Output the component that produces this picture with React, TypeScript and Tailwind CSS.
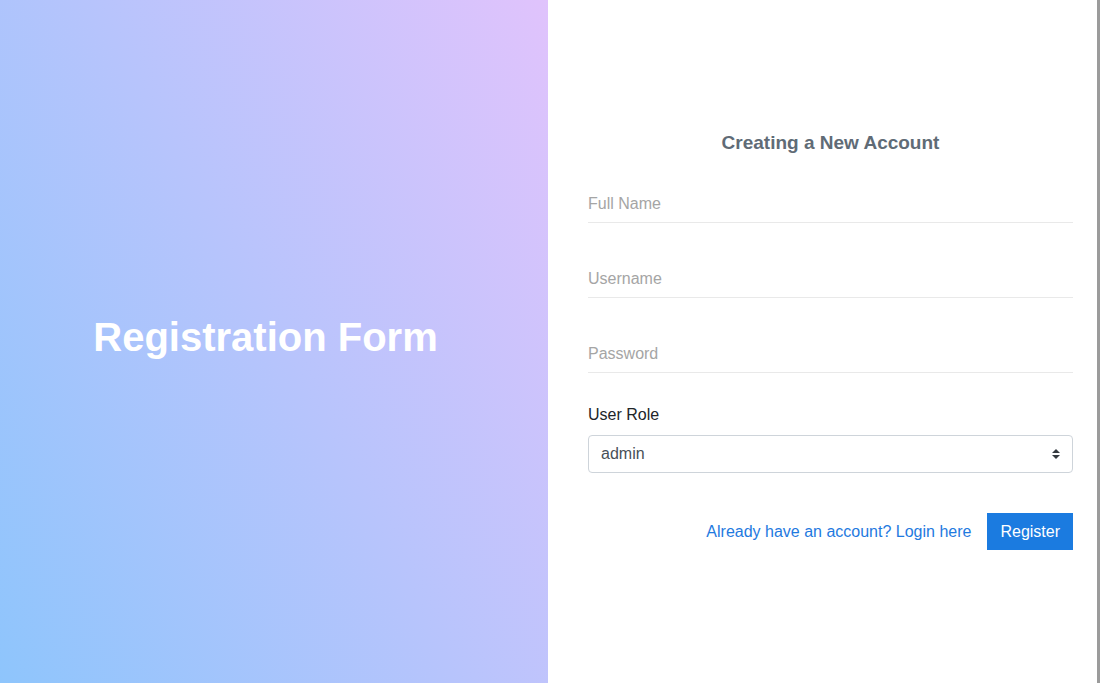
import React, { useState } from 'react';

const ARROW =
  "url(\"data:image/svg+xml,%3csvg xmlns='http://www.w3.org/2000/svg' width='4' height='5' viewBox='0 0 4 5'%3e%3cpath fill='%23343a40' d='M2 0L0 2h4zm0 5L0 3h4z'/%3e%3c/svg%3e\")";

const fields = [
  { name: 'fullName', placeholder: 'Full Name', type: 'text' },
  { name: 'username', placeholder: 'Username', type: 'text' },
  { name: 'password', placeholder: 'Password', type: 'password' }
];

export default function App() {
  const [role, setRole] = useState('admin');

  return (
    <div className="flex h-screen w-full font-['Liberation_Sans',Arial,sans-serif]">
      {/* left side banner */}
      <div className="w-[548px] shrink-0 flex items-center justify-center pr-[17px] pb-[9px] bg-[linear-gradient(62deg,#8ec5fc_0%,#e0c3fc_100%)]">
        <h1 className="text-[40px] font-bold leading-[48px] text-white">Registration Form</h1>
      </div>

      {/* form */}
      <div className="flex-1 bg-white pt-[129px] pl-10 pr-6">
        <h4 className="text-center text-[19px] leading-[27px] font-bold text-[#606b76] mb-[29px]">
          Creating a New Account
        </h4>

        <form onSubmit={e => e.preventDefault()}>
          {fields.map(f => (
            <input
              key={f.name}
              name={f.name}
              type={f.type}
              placeholder={f.placeholder}
              className="block w-full h-[38px] mb-[37px] px-0 text-[16px] text-[#495057] border-b border-[#e9e9e9] outline-none placeholder:text-[#a5a5a5]"
            />
          ))}

          <label className="block text-[16px] leading-6 text-[#212529] mt-[-7px] mb-[8px]">User Role</label>
          <select
            value={role}
            onChange={e => setRole(e.target.value)}
            style={{ backgroundImage: ARROW }}
            className="block w-full h-[38px] appearance-none rounded border border-[#ced4da] bg-white bg-no-repeat bg-[length:8px_10px] bg-[position:right_12px_center] pl-3 pr-7 text-[16px] text-[#495057] outline-none"
          >
            <option value="admin">admin</option>
            <option value="user">user</option>
          </select>

          <div className="flex items-center justify-end gap-4 mt-10">
            <a href="#" className="text-[16px] text-[#1f7ae0]">
              Already have an account? Login here
            </a>
            <button
              type="submit"
              className="h-[37px] px-[13px] bg-[#1b7be0] text-white text-[16px]"
            >
              Register
            </button>
          </div>
        </form>
      </div>

      <div className="w-[3px] shrink-0 bg-[#9b9b9b]" />
    </div>
  );
}
